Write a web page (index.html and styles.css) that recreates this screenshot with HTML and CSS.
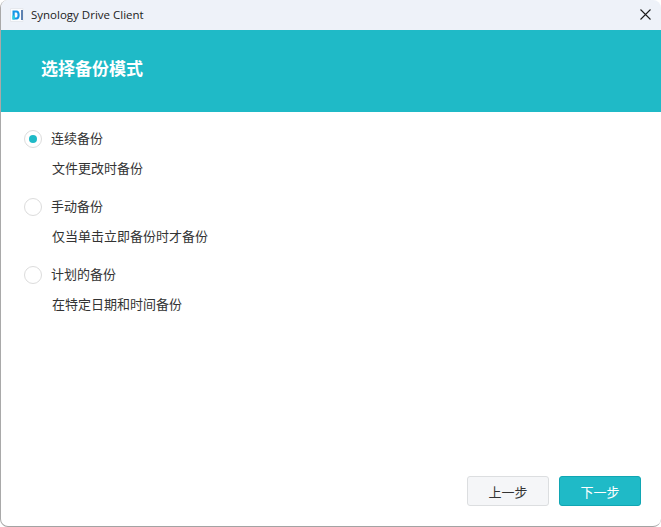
FILE: index.html
```html
<!DOCTYPE html>
<html lang="zh-CN">
<head>
<meta charset="utf-8">
<title>Synology Drive Client</title>
<link rel="stylesheet" href="styles.css">
</head>
<body>
<div class="window">
  <div class="titlebar">
    <svg class="app-icon" width="16" height="16" viewBox="0 0 16 16">
      <path d="M1.500 1.500h12.500v13H1.500z" fill="#fbfcfe" stroke="#e6e9ee" stroke-width="1"/>
      <path d="M3.500 3.500h4c2.200 0 3.200 1.900 3.200 4.500s-1 4.500-3.200 4.500h-4zM5.700 5.500v5h1.500c1 0 1.300-1 1.300-2.500s-.3-2.500-1.300-2.500z" fill="#1596e6" fill-rule="evenodd"/>
      <path d="M3.500 8.500h2.200v4H3.500z" fill="#29d0dc"/>
      <path d="M12.300 3h1.400v10h-1.400z" fill="#1c4f92"/>
    </svg>
    <span class="app-name">Synology Drive Client</span>
    <svg class="close" width="11" height="11" viewBox="0 0 11 11">
      <path d="M.5.500l10 10M10.500.500l-10 10" stroke="#1c1c1c" stroke-width="1.100" fill="none"/>
    </svg>
  </div>
  <header class="banner"><h1>选择备份模式</h1></header>
  <main class="content">
    <div class="options">
      <div class="option">
        <div class="option-row"><span class="radio checked"></span><span class="label">连续备份</span></div>
        <p class="desc">文件更改时备份</p>
      </div>
      <div class="option">
        <div class="option-row"><span class="radio"></span><span class="label">手动备份</span></div>
        <p class="desc">仅当单击立即备份时才备份</p>
      </div>
      <div class="option">
        <div class="option-row"><span class="radio"></span><span class="label">计划的备份</span></div>
        <p class="desc">在特定日期和时间备份</p>
      </div>
    </div>
    <footer class="actions">
      <button class="btn">上一步</button>
      <button class="btn primary">下一步</button>
    </footer>
  </main>
</div>
</body>
</html>
```

FILE: styles.css
```css
* { box-sizing: border-box; }
html, body { margin: 0; height: 100%; background: #fff; }
body { font-family: "Noto Sans CJK SC", sans-serif; color: #333; overflow: hidden; }
.window {
  width: 661px; height: 527px;
  display: flex; flex-direction: column;
  background: #fff;
  border-left: 1px solid #a9a9a9;
  border-bottom: 1px solid #a3a3a3;
  border-radius: 8px;
  overflow: hidden;
}
.titlebar {
  height: 30px; flex: none;
  display: flex; align-items: center;
  padding: 0 10px 1px 8px;
  background: #eef2f9;
}
.app-icon { flex: none; margin-right: 6px; }
.app-name { font-family: "Open Sans", sans-serif; font-size: 11.500px; line-height: 14px; color: #222; }
.close { margin-left: auto; }
.banner {
  height: 82px; flex: none;
  display: flex; align-items: center;
  padding: 0 0 7px 40px;
  background: #1fbac7;
}
.banner h1 { margin: 0; font-size: 17px; font-weight: 700; color: #fff; line-height: 1; }
.content { flex: 1; display: flex; flex-direction: column; padding: 17px 20px 20px 23px; }
.options { flex: 1; display: flex; flex-direction: column; gap: 19px; }
.option { display: flex; flex-direction: column; gap: 9px; }
.option-row { display: flex; align-items: center; gap: 9px; height: 20px; font-size: 13px; }
.label { line-height: 18px; margin-bottom: 2px; }
.radio {
  width: 18px; height: 18px; flex: none;
  border: 1px solid #dcdcdc; border-radius: 50%;
  display: flex; align-items: center; justify-content: center;
  background: #fff;
}
.radio.checked::after {
  content: ""; width: 8px; height: 8px; border-radius: 50%; background: #1fbac7;
}
.desc { margin: 0 0 0 28px; height: 20px; line-height: 20px; font-size: 13px; }
.actions { display: flex; justify-content: flex-end; gap: 10px; }
.btn {
  width: 82px; height: 30px; padding: 0;
  font-family: inherit; font-size: 13px; color: #333;
  background: #f5f6f8;
  border: 1px solid #dcdee0; border-radius: 3px;
}
.btn.primary { background: #1fbac7; border-color: #10a6b3; color: #fff; }
```
